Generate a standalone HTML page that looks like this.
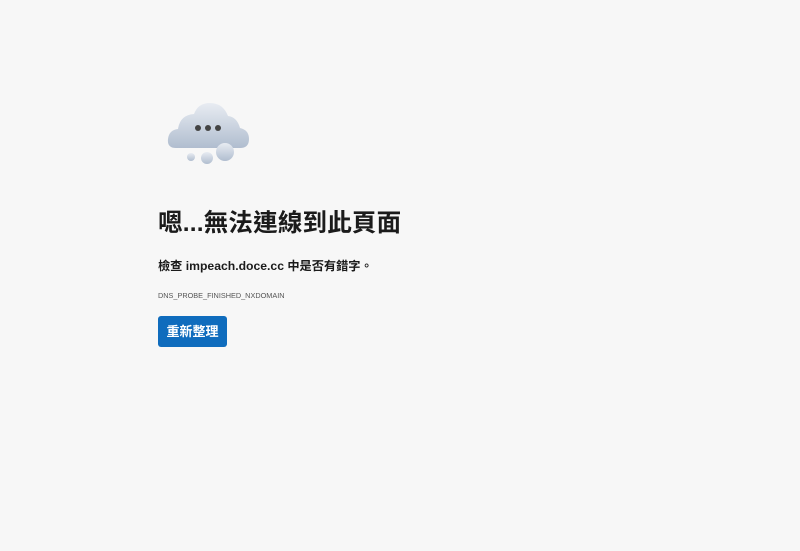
<!DOCTYPE html>
<html><head><meta charset="utf-8">
<style>
html,body{margin:0;padding:0;background:#f7f7f7;width:800px;height:551px;overflow:hidden;font-family:"Liberation Sans","Noto Sans CJK TC",sans-serif;color:#1b1b1b}
.icon{position:absolute;left:164px;top:100px}
h1{position:absolute;left:158px;top:204px;margin:0;font-size:24.5px;font-weight:bold;white-space:nowrap;letter-spacing:0.2px}
.p{position:absolute;left:158px;top:256px;font-size:12.2px;font-weight:600;white-space:nowrap}
.code{position:absolute;left:158px;top:291px;font-size:7.3px;color:#555;white-space:nowrap}
.btn{position:absolute;left:158px;top:316px;width:69px;height:31px;background:#0f6cbd;border-radius:3px;color:#fff;font-size:13px;font-weight:600;line-height:31px;text-align:center}
</style></head><body>
<svg class="icon" width="90" height="68" viewBox="0 0 90 68">
<defs><linearGradient id="g" x1="0" y1="0" x2="0" y2="1"><stop offset="0" stop-color="#e8ecf2"/><stop offset="1" stop-color="#b0bdcf"/></linearGradient></defs>
<path d="M12 48 Q3 48 4 39 Q5 30 14 29 Q16 15 30 14 Q34 3 46 3 Q59 3 64 16 Q73 17 76 28 Q85 30 85 39 Q85 48 76 48 Z" fill="url(#g)"/>
<circle cx="34" cy="28" r="3" fill="#444"/><circle cx="44" cy="28" r="3" fill="#444"/><circle cx="54" cy="28" r="3" fill="#444"/>
<circle cx="61" cy="52" r="9" fill="url(#g)"/>
<circle cx="43" cy="58" r="6" fill="url(#g)"/>
<circle cx="27" cy="57" r="4" fill="url(#g)"/>
</svg>
<h1>嗯...無法連線到此頁面</h1>
<div class="p">檢查 impeach.doce.cc 中是否有錯字。</div>
<div class="code">DNS_PROBE_FINISHED_NXDOMAIN</div>
<div class="btn">重新整理</div>
</body></html>
